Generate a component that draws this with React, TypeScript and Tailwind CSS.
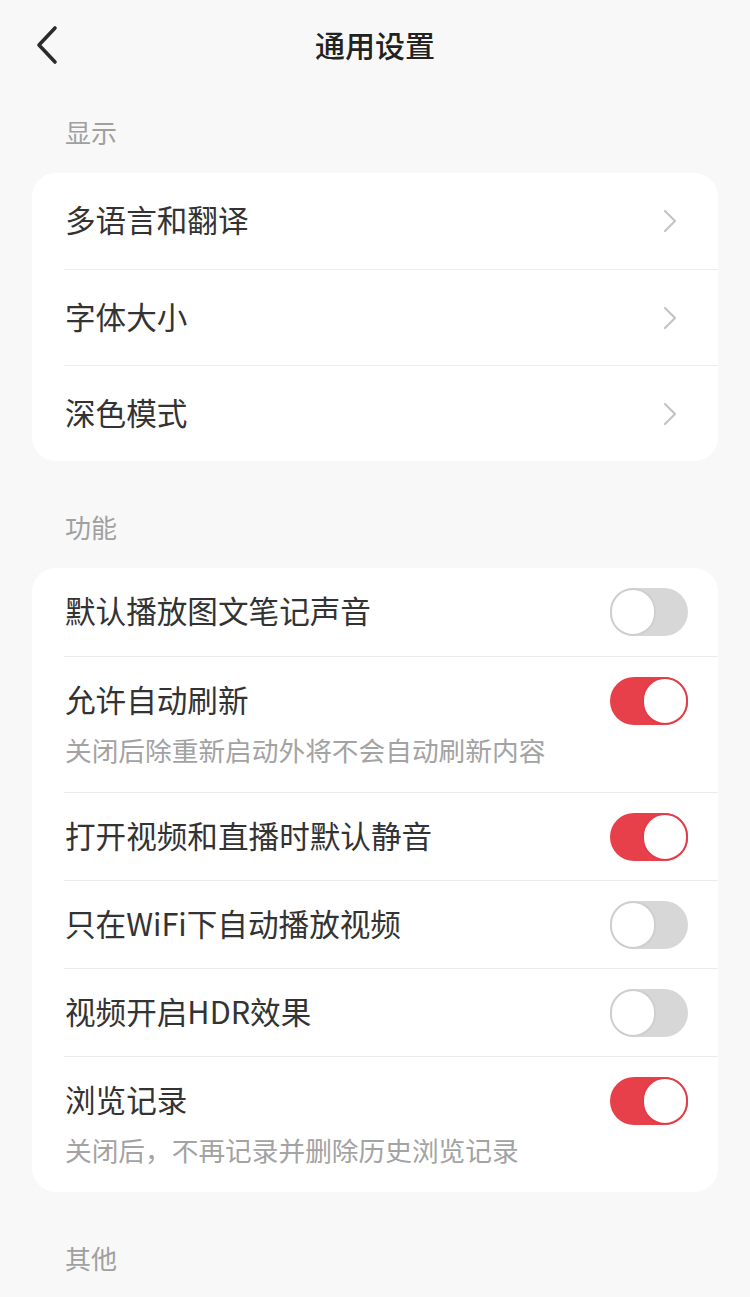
import React from "react";

const font = { fontFamily: '"Noto Sans CJK SC", "Noto Sans", sans-serif' };

function Toggle({ on }: { on: boolean }) {
  return (
    <div
      className={`relative w-[78px] h-[48px] rounded-full shrink-0 ${on ? "bg-[#e8404b]" : "bg-[#d7d7d7]"}`}
    >
      <div
        className={`absolute top-0 w-[46px] h-[48px] rounded-full bg-white border-2 ${
          on ? "right-0 border-[#e23d48]" : "left-0 border-[#cfcfcf]"
        }`}
      />
    </div>
  );
}

function Chevron() {
  return (
    <svg width="16" height="24" viewBox="0 0 16 24" className="shrink-0">
      <path d="M3 2 L13 12 L3 22" fill="none" stroke="#c4c4c4" strokeWidth="2.2" strokeLinecap="round" strokeLinejoin="round" />
    </svg>
  );
}

function NavRow({ title, first }: { title: string; first?: boolean }) {
  return (
    <div className={`ml-[32px] h-[96px] flex items-center pr-[40px] ${first ? "" : "border-t border-[#ececec]"}`}>
      <span className="flex-1 pl-[1px] text-[30.6px] text-[#333333] leading-none -mt-[3px]">{title}</span>
      <Chevron />
    </div>
  );
}

function ToggleRow({ title, sub, on, first }: { title: string; sub?: string; on: boolean; first?: boolean }) {
  return (
    <div className={`ml-[32px] pr-[30px] ${first ? "" : "border-t border-[#ececec]"} ${sub ? "h-[136px]" : "h-[88px]"}`}>
      <div className="h-[88px] flex items-center">
        <span className="flex-1 pl-[1px] text-[30.6px] text-[#333333] leading-none -mt-[3px]">{title}</span>
        <Toggle on={on} />
      </div>
      {sub && (
        <div className="-mt-[8px] pl-[1px] text-[26.7px] leading-none text-[#a3a3a3]">{sub}</div>
      )}
    </div>
  );
}

function Label({ text, top }: { text: string; top: string }) {
  return (
    <div className={`${top} pl-[65px] h-[36px] flex items-center text-[26px] text-[#a0a0a0] leading-none`}>
      {text}
    </div>
  );
}

export default function App() {
  return (
    <div className="w-[750px] h-[1297px] bg-[#f8f8f8] overflow-hidden" style={font}>
      <div className="relative h-[90px] flex items-center justify-center">
        <svg width="24" height="40" viewBox="0 0 24 40" className="absolute left-[35px] top-[25px]">
          <path d="M20 3 L4 20 L20 37" fill="none" stroke="#2b2b2b" strokeWidth="3.6" strokeLinecap="round" strokeLinejoin="round" />
        </svg>
        <span className="text-[30px] font-medium text-[#222222] leading-none -mt-[2px]">通用设置</span>
      </div>

      <Label text="显示" top="mt-[24px]" />
      <div className="mt-[23px] mx-[32px] bg-white rounded-[24px] overflow-hidden">
        <NavRow title="多语言和翻译" first />
        <NavRow title="字体大小" />
        <NavRow title="深色模式" />
      </div>

      <Label text="功能" top="mt-[48px]" />
      <div className="mt-[23px] mx-[32px] bg-white rounded-[24px] overflow-hidden">
        <ToggleRow title="默认播放图文笔记声音" on={false} first />
        <ToggleRow title="允许自动刷新" sub="关闭后除重新启动外将不会自动刷新内容" on />
        <ToggleRow title="打开视频和直播时默认静音" on />
        <ToggleRow title="只在WiFi下自动播放视频" on={false} />
        <ToggleRow title="视频开启HDR效果" on={false} />
        <ToggleRow title="浏览记录" sub="关闭后，不再记录并删除历史浏览记录" on />
      </div>

      <Label text="其他" top="mt-[48px]" />
    </div>
  );
}
